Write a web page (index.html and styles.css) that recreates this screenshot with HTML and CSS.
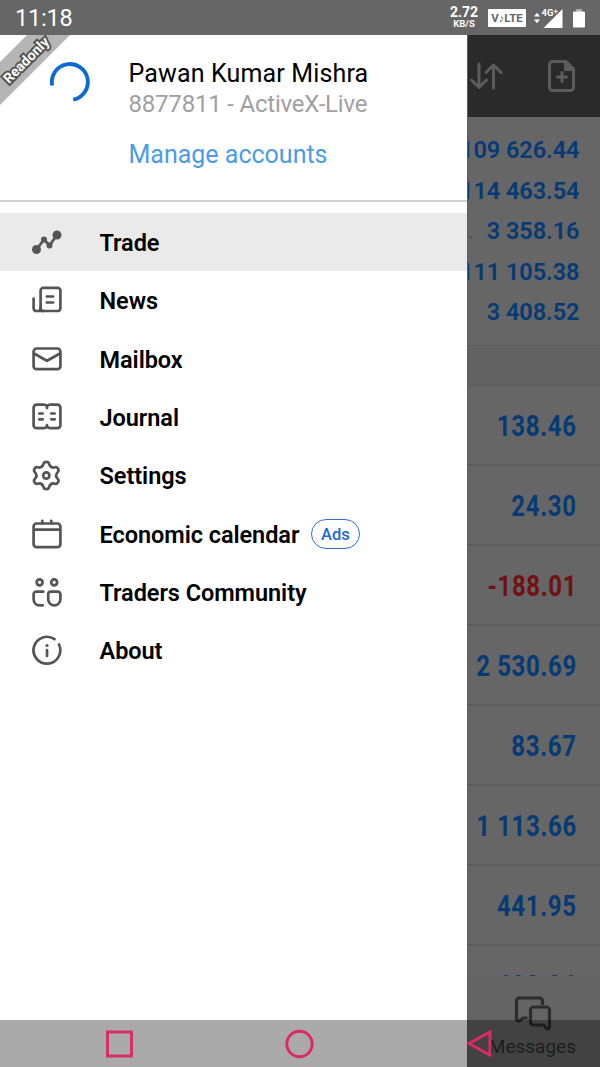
FILE: index.html
```html
<!DOCTYPE html>
<html lang="en">
<head>
    <meta charset="UTF-8">
    <title>Trade</title>
    <link rel="stylesheet" href="styles.css">
</head>
<body>
    <header class="status-bar">
        <span class="clock">11:18</span>
        <div class="speed"><b>2.72</b><small>KB/S</small></div>
        <span class="volte">V<i>&#9834;</i>LTE</span>
        <svg class="signal" width="31" height="22" viewBox="0 0 31 22" fill="#fff">
            <path d="M1 9.500l3-3.800 3 3.800zM1 12.500l3 3.800 3-3.800z"/>
            <path d="M10.500 21L29.500 2v19z"/>
            <text x="8.500" y="9" stroke="#666" stroke-width="1.500" paint-order="stroke">4G<tspan dy="-2" font-size="8">+</tspan></text>
        </svg>
        <svg class="battery" width="12" height="20" viewBox="0 0 12 20">
            <path d="M3 1h6v3H3z" fill="#aaa"/>
            <rect x="0" y="3.500" width="12" height="16" rx="1" fill="#fff"/>
        </svg>
    </header>

    <main class="screen">
        <aside class="drawer">
            <div class="ribbon"><span>Readonly</span></div>
            <div class="account">
                <svg class="spinner" width="42" height="42" viewBox="0 0 42 42" fill="none" stroke="#0b6bd3" stroke-width="3.800">
                    <path d="M3.200 24.500A18 18 0 1 1 24.200 38.700"/>
                </svg>
                <div class="account-info">
                    <div class="name">Pawan Kumar Mishra</div>
                    <div class="login">8877811 - ActiveX-Live</div>
                    <a class="manage">Manage accounts</a>
                </div>
            </div>

            <nav class="menu">
                <a class="item active">
                    <svg class="icon" viewBox="0 0 32 32">
                        <path d="M5.500 22.500L13 12.500l5.500 6L26 8"/>
                        <g fill="#555" stroke="none"><circle cx="5.500" cy="22.500" r="4.500"/><circle cx="26" cy="8" r="4.500"/><circle cx="13" cy="12.500" r="3"/><circle cx="18.500" cy="18.500" r="3"/></g>
                    </svg>
                    <span>Trade</span>
                </a>
                <a class="item">
                    <svg class="icon" viewBox="0 0 32 32">
                        <rect x="9.600" y="2.800" width="19.800" height="23.200" rx="2.800"/>
                        <path d="M2.600 13.500v9.700a2.800 2.800 0 0 0 2.800 2.800h7M9.600 22v1.200a2.800 2.800 0 0 1-2.800 2.800M15.800 11.500h6.400M15.800 17.500h6.400"/>
                    </svg>
                    <span>News</span>
                </a>
                <a class="item">
                    <svg class="icon" viewBox="0 0 32 32">
                        <rect x="2.600" y="5.500" width="26.800" height="20.700" rx="3"/>
                        <path d="M3 10.500l13 7.300 13-7.300"/>
                    </svg>
                    <span>Mailbox</span>
                </a>
                <a class="item">
                    <svg class="icon" viewBox="0 0 32 32">
                        <path d="M16 4.500c-.6-1.300-1.400-1.900-3-1.900H5.600a3 3 0 0 0-3 3v17.600a3 3 0 0 0 3 3H13c1.600 0 2.400-.6 3-1.900.6 1.300 1.400 1.900 3 1.900h7.400a3 3 0 0 0 3-3V5.600a3 3 0 0 0-3-3H19c-1.600 0-2.400.6-3 1.900zM16 4v2M16 23v2M8.300 11.500h3.400M8.300 17.300h3.400M20.300 11.500h3.400M20.300 17.300h3.400"/>
                    </svg>
                    <span>Journal</span>
                </a>
                <a class="item">
                    <svg class="icon" viewBox="0 0 32 32">
                        <g transform="translate(15.300 15.500)">
                            <path d="M-2.800-11.600C-2.200-14.200 2.200-14.200 2.800-11.600Q4.100-7.100 8.650-8.220C11.200-9 13.400-5.200 11.450-3.380Q8.200 0 11.450 3.380C13.400 5.200 11.200 9 8.650 8.220Q4.100 7.100 2.800 11.600C2.200 14.200-2.200 14.200-2.800 11.600Q-4.100 7.100-8.650 8.220C-11.200 9-13.400 5.200-11.450 3.380Q-8.200 0-11.450-3.380C-13.400-5.200-11.200-9-8.650-8.220Q-4.100-7.100-2.800-11.600z"/>
                            <circle r="3.100"/>
                        </g>
                    </svg>
                    <span>Settings</span>
                </a>
                <a class="item">
                    <svg class="icon" viewBox="0 0 32 32">
                        <rect x="2.600" y="5.500" width="26.800" height="23.700" rx="3"/>
                        <path d="M3 11.700h26M11.300 2.800v2.500M20.300 2.800v2.500"/>
                    </svg>
                    <span>Economic calendar</span>
                    <em class="ads">Ads</em>
                </a>
                <a class="item">
                    <svg class="icon" viewBox="0 0 32 32">
                        <circle cx="8.600" cy="5.300" r="3"/>
                        <circle cx="23.200" cy="5.300" r="3"/>
                        <path d="M12.300 14.700H5.200a2.600 2.600 0 0 0-2.600 2.600v4.700c0 3.700 2.500 6.300 6 6.300h3.200M17.200 17.300a2.600 2.600 0 0 1 2.600-2.600h7a2.600 2.600 0 0 1 2.600 2.600v5a6.100 6.100 0 0 1-12.200 0z"/>
                    </svg>
                    <span>Traders Community</span>
                </a>
                <a class="item">
                    <svg class="icon" viewBox="0 0 32 32">
                        <path d="M23.500 4.200A13.400 13.400 0 1 0 28 9.500M16 15v6"/>
                        <circle cx="16" cy="10.500" r="1.600" fill="#555" stroke="none"/>
                    </svg>
                    <span>About</span>
                </a>
            </nav>
        </aside>

        <section class="page">
            <div class="toolbar">
                <svg width="34" height="30" viewBox="0 0 34 30">
                    <path d="M10 3v23M2.500 19l7.500 7.500 7.500-7.500M24.500 27V4M17 11.500L24.500 4l7.500 7.500"/>
                </svg>
                <svg width="28" height="34" viewBox="0 0 28 34">
                    <path d="M4.500 2.500H18l7.500 7.500v18.500a3 3 0 0 1-3 3h-18a3 3 0 0 1-3-3v-23a3 3 0 0 1 3-3zM14 13.500v9M9.500 18h9"/>
                    <path d="M17.500 3v7.500H25z" fill="#5c5c5c"/>
                </svg>
            </div>
            <div class="summary">
                <div>109 626.44</div>
                <div>114 463.54</div>
                <div><s>.</s>3 358.16</div>
                <div>111 105.38</div>
                <div>3 408.52</div>
            </div>
            <div class="divider"></div>
            <div class="positions">
                <div><span>138.46</span></div>
                <div><span>24.30</span></div>
                <div class="loss"><span>-188.01</span></div>
                <div><span>2 530.69</span></div>
                <div><span>83.67</span></div>
                <div><span>1 113.66</span></div>
                <div><span>441.95</span></div>
                <div><span>608.86</span></div>
            </div>
            <div class="tab">
                <svg width="38" height="36" viewBox="0 0 38 36">
                    <path d="M13.500 22H9l-3 2.500c-1.500 1.200-3.500.5-3.500-1.500V5a3 3 0 0 1 3-3h20a3 3 0 0 1 3 3v4"/>
                    <path d="M19.500 11h13a3 3 0 0 1 3 3v17c0 2-1.500 2.500-3 1.300L29.500 29h-10a3 3 0 0 1-3-3V14a3 3 0 0 1 3-3z"/>
                </svg>
                <span>Messages</span>
            </div>
        </section>
    </main>

    <footer class="nav-bar">
        <svg width="28" height="30" viewBox="0 0 28 30"><rect x="2.500" y="3" width="24" height="24"/></svg>
        <svg width="30" height="30" viewBox="0 0 30 30"><circle cx="15.500" cy="15" r="12.700"/></svg>
        <svg width="28" height="30" viewBox="0 0 28 30"><path d="M4 14.500L25 3v23z"/></svg>
    </footer>
</body>
</html>
```

FILE: styles.css
```css
* {
    box-sizing: border-box;
}

body {
    margin: 0;
    width: 600px;
    height: 1067px;
    overflow: hidden;
    position: relative;
    background: #666;
    font-family: Roboto, "Liberation Sans", sans-serif;
}

svg {
    display: block;
    flex: none;
}

/* status bar */
.status-bar {
    height: 35px;
    display: flex;
    align-items: center;
    padding: 0 15px;
    background: #666;
    color: #fff;
}

.clock {
    flex: 1;
    font-size: 23.5px;
    letter-spacing: -0.2px;
}

.speed {
    width: 30px;
    display: flex;
    flex-direction: column;
    align-items: center;
    line-height: 1;
}

.speed b {
    font-size: 14px;
    line-height: 12px;
}

.speed small {
    font-size: 9.5px;
    font-weight: bold;
    line-height: 11px;
}

.volte {
    width: 38px;
    height: 18px;
    margin: 1px 7px 0 9px;
    border-radius: 1px;
    background: #fff;
    color: #666;
    font-size: 11.5px;
    font-weight: bold;
    line-height: 19px;
    text-align: center;
}

.volte i {
    font-size: 11px;
    font-style: normal;
}

.signal text {
    font-size: 9.5px;
    font-weight: bold;
}

.battery {
    margin-left: 9px;
}

.screen {
    height: 1032px;
    display: grid;
    grid-template-columns: 467px 133px;
}

/* drawer */
.drawer {
    position: relative;
    background: #fff;
}

.ribbon {
    position: absolute;
    top: 0;
    left: 0;
    width: 70px;
    height: 70px;
    background: #b5b5b5;
    clip-path: polygon(27px 0, 70px 0, 0 70px, 0 27px);
}

.ribbon span {
    position: absolute;
    top: 15px;
    left: -9px;
    width: 70px;
    color: #fff;
    font-size: 14px;
    font-weight: bold;
    line-height: 20px;
    text-align: center;
    transform: rotate(-45deg);
    -webkit-text-stroke: 4px #555;
    paint-order: stroke fill;
}

.account {
    height: 167px;
    display: flex;
    padding: 22px 0 0 49px;
    border-bottom: 2px solid #d0d0d0;
}

.spinner {
    margin-top: 4px;
}

.account-info {
    padding: 1px 0 0 37.5px;
    font-size: 25px;
    line-height: 31px;
    white-space: nowrap;
}

.name {
    color: #000;
    letter-spacing: 0.15px;
}

.login {
    color: #a0a0a3;
    font-size: 24px;
    letter-spacing: -0.2px;
}

.manage {
    display: block;
    margin-top: 19px;
    color: #4a9cea;
}

.menu {
    padding-top: 11px;
}

.item {
    height: 58.33px;
    display: flex;
    align-items: center;
    padding: 0 0 0 31px;
    color: #000;
    font-size: 23.5px;
    font-weight: 600;
}

.item span {
    margin-left: 36.5px;
    padding-top: 2px;
    letter-spacing: -0.05px;
}

.active {
    background: #eaeaea;
}

.icon {
    width: 32px;
    height: 32px;
    margin-top: 1px;
    fill: none;
    stroke: #555;
    stroke-width: 2.7;
    stroke-linecap: round;
    stroke-linejoin: round;
}

.ads {
    width: 49px;
    height: 30px;
    margin-left: 11.5px;
    border: 1.5px solid #2f6fd8;
    border-radius: 15px;
    color: #1e68d8;
    font-size: 16.5px;
    font-style: normal;
    font-weight: 500;
    line-height: 29px;
    text-align: center;
}

/* dimmed page behind the drawer */
.page {
    overflow: hidden;
    display: flex;
    flex-direction: column;
    border-left: 1px solid #5c5c5c;
    background: #666;
    color: #063a74;
    font-weight: bold;
    white-space: nowrap;
}

.toolbar {
    height: 82px;
    flex: none;
    display: flex;
    align-items: center;
    justify-content: space-between;
    padding: 0 24px 0 1px;
    background: #2a2a2a;
}

.toolbar svg {
    fill: none;
    stroke: #5c5c5c;
    stroke-width: 3;
    stroke-linecap: round;
    stroke-linejoin: round;
}

.summary {
    height: 229px;
    flex: none;
    padding: 13px 20.5px 0 0;
    border-bottom: 1px solid #5b5b5b;
    font-size: 23.5px;
    font-weight: 600;
    line-height: 40.6px;
}

.summary div {
    display: flex;
    justify-content: flex-end;
    letter-spacing: -0.05px;
}

.summary s {
    margin-right: 13px;
    color: #555;
    text-decoration: none;
}

.divider {
    height: 40px;
    flex: none;
    background: #626262;
    border-bottom: 1px solid #5b5b5b;
}

.positions {
    height: 590px;
    flex: none;
    overflow: hidden;
    font-size: 30px;
}

.positions div {
    height: 80px;
    padding-right: 24px;
    border-bottom: 2px solid #5d5d5d;
    line-height: 79px;
    display: flex;
    justify-content: flex-end;
}

.positions span {
    transform: scaleX(0.8);
    transform-origin: right;
    letter-spacing: 0.8px;
    margin-right: -1px;
}

.positions .loss {
    color: #701114;
}

.tab {
    flex: 1;
    padding: 20px 24px 0 0;
    background: #646464;
    color: #2c2c2c;
    font-size: 19px;
    font-weight: normal;
    display: flex;
    flex-direction: column;
    align-items: flex-end;
}

.tab svg {
    margin-right: 24px;
    fill: none;
    stroke: #2c2c2c;
    stroke-width: 3.2;
    stroke-linejoin: round;
}

.tab span {
    margin-top: 3px;
}

/* system navigation, drawn over everything */
.nav-bar {
    position: absolute;
    left: 0;
    bottom: 0;
    width: 600px;
    height: 47px;
    display: flex;
    align-items: center;
    justify-content: space-between;
    padding: 0 107px 0 105px;
    background: rgba(0, 0, 0, 0.335);
}

.nav-bar svg {
    fill: none;
    stroke: #dc2a66;
    stroke-width: 2.9;
}
```
